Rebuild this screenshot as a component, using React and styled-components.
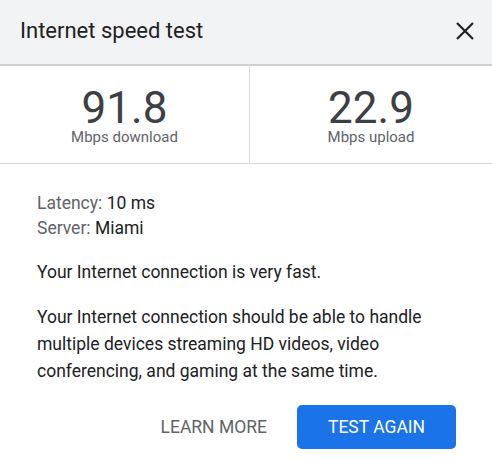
import React from "react";
import styled, { createGlobalStyle } from "styled-components";

const GlobalStyle = createGlobalStyle`
  html, body {
    margin: 0;
    padding: 0;
    background: #ffffff;
  }
  body {
    font-family: Roboto, "Liberation Sans", Arial, sans-serif;
    -webkit-font-smoothing: antialiased;
  }
`;

const Card = styled.div`
  width: 492px;
  height: 472px;
  background: #ffffff;
  display: flex;
  flex-direction: column;
`;

const Header = styled.div`
  height: 65px;
  box-sizing: border-box;
  background: #f1f3f4;
  border-bottom: 1px solid #cfd1d5;
  display: flex;
  align-items: center;
  justify-content: space-between;
  padding: 0 17px 3px 20px;
`;

const Title = styled.h1`
  margin: 0;
  font-size: 22px;
  font-weight: 400;
  color: #202124;
`;

const CloseButton = styled.button`
  border: 0;
  background: none;
  padding: 0;
  width: 20px;
  height: 20px;
  display: flex;
  align-items: center;
  justify-content: center;
  color: #202124;
  cursor: pointer;
`;

const Stats = styled.div`
  display: grid;
  grid-template-columns: 249px 1fr;
  height: 99px;
  box-sizing: border-box;
  border-top: 1px solid #cfd1d5;
  border-bottom: 1px solid #dadce0;
`;

const Stat = styled.div`
  display: flex;
  flex-direction: column;
  align-items: center;
  padding-top: 21px;
  border-left: ${(p) => (p.$divided ? "1px solid #dadce0" : "none")};
`;

const StatValue = styled.div`
  font-size: 44px;
  line-height: 42px;
  color: #3c4043;
`;

const StatLabel = styled.div`
  font-size: 15px;
  line-height: 16px;
  color: #5f6368;
`;

const Body = styled.div`
  padding: 27px 36px 0 37px;
  display: flex;
  flex-direction: column;
`;

const InfoLine = styled.div`
  font-size: 17.5px;
  line-height: 25px;
  color: #202124;
`;

const InfoKey = styled.span`
  color: #5f6368;
`;

const Paragraph = styled.p`
  margin: ${(p) => p.$gap}px 0 0;
  font-size: 17.5px;
  line-height: 27px;
  color: #202124;
`;

const Actions = styled.div`
  display: flex;
  justify-content: flex-end;
  align-items: center;
  gap: 30px;
  margin-top: 20px;
`;

const TextButton = styled.button`
  border: 0;
  background: none;
  font-family: inherit;
  font-size: 17.5px;
  color: #5f6368;
  padding: 0;
  cursor: pointer;
`;

const PrimaryButton = styled.button`
  border: 0;
  border-radius: 5px;
  background: #1a73e8;
  color: #ffffff;
  font-family: inherit;
  font-size: 17.5px;
  width: 159px;
  height: 44px;
  cursor: pointer;
`;

const CloseIcon = () => (
  <svg width="20" height="20" viewBox="0 0 20 20" aria-hidden="true">
    <path
      d="M2 2L18 18M18 2L2 18"
      stroke="currentColor"
      strokeWidth="2.2"
      fill="none"
    />
  </svg>
);

const stats = [
  { value: "91.8", label: "Mbps download" },
  { value: "22.9", label: "Mbps upload" },
];

const App = () => {
  return (
    <>
      <GlobalStyle />
      <Card>
        <Header>
          <Title>Internet speed test</Title>
          <CloseButton aria-label="Close">
            <CloseIcon />
          </CloseButton>
        </Header>
        <Stats>
          {stats.map((s, index) => (
            <Stat key={s.label} $divided={index > 0}>
              <StatValue>{s.value}</StatValue>
              <StatLabel>{s.label}</StatLabel>
            </Stat>
          ))}
        </Stats>
        <Body>
          <InfoLine>
            <InfoKey>Latency:</InfoKey> 10 ms
          </InfoLine>
          <InfoLine>
            <InfoKey>Server:</InfoKey> Miami
          </InfoLine>
          <Paragraph $gap={18}>Your Internet connection is very fast.</Paragraph>
          <Paragraph $gap={18}>
            Your Internet connection should be able to handle multiple devices
            streaming HD videos, video conferencing, and gaming at the same
            time.
          </Paragraph>
          <Actions>
            <TextButton>LEARN MORE</TextButton>
            <PrimaryButton>TEST AGAIN</PrimaryButton>
          </Actions>
        </Body>
      </Card>
    </>
  );
};

export default App;
